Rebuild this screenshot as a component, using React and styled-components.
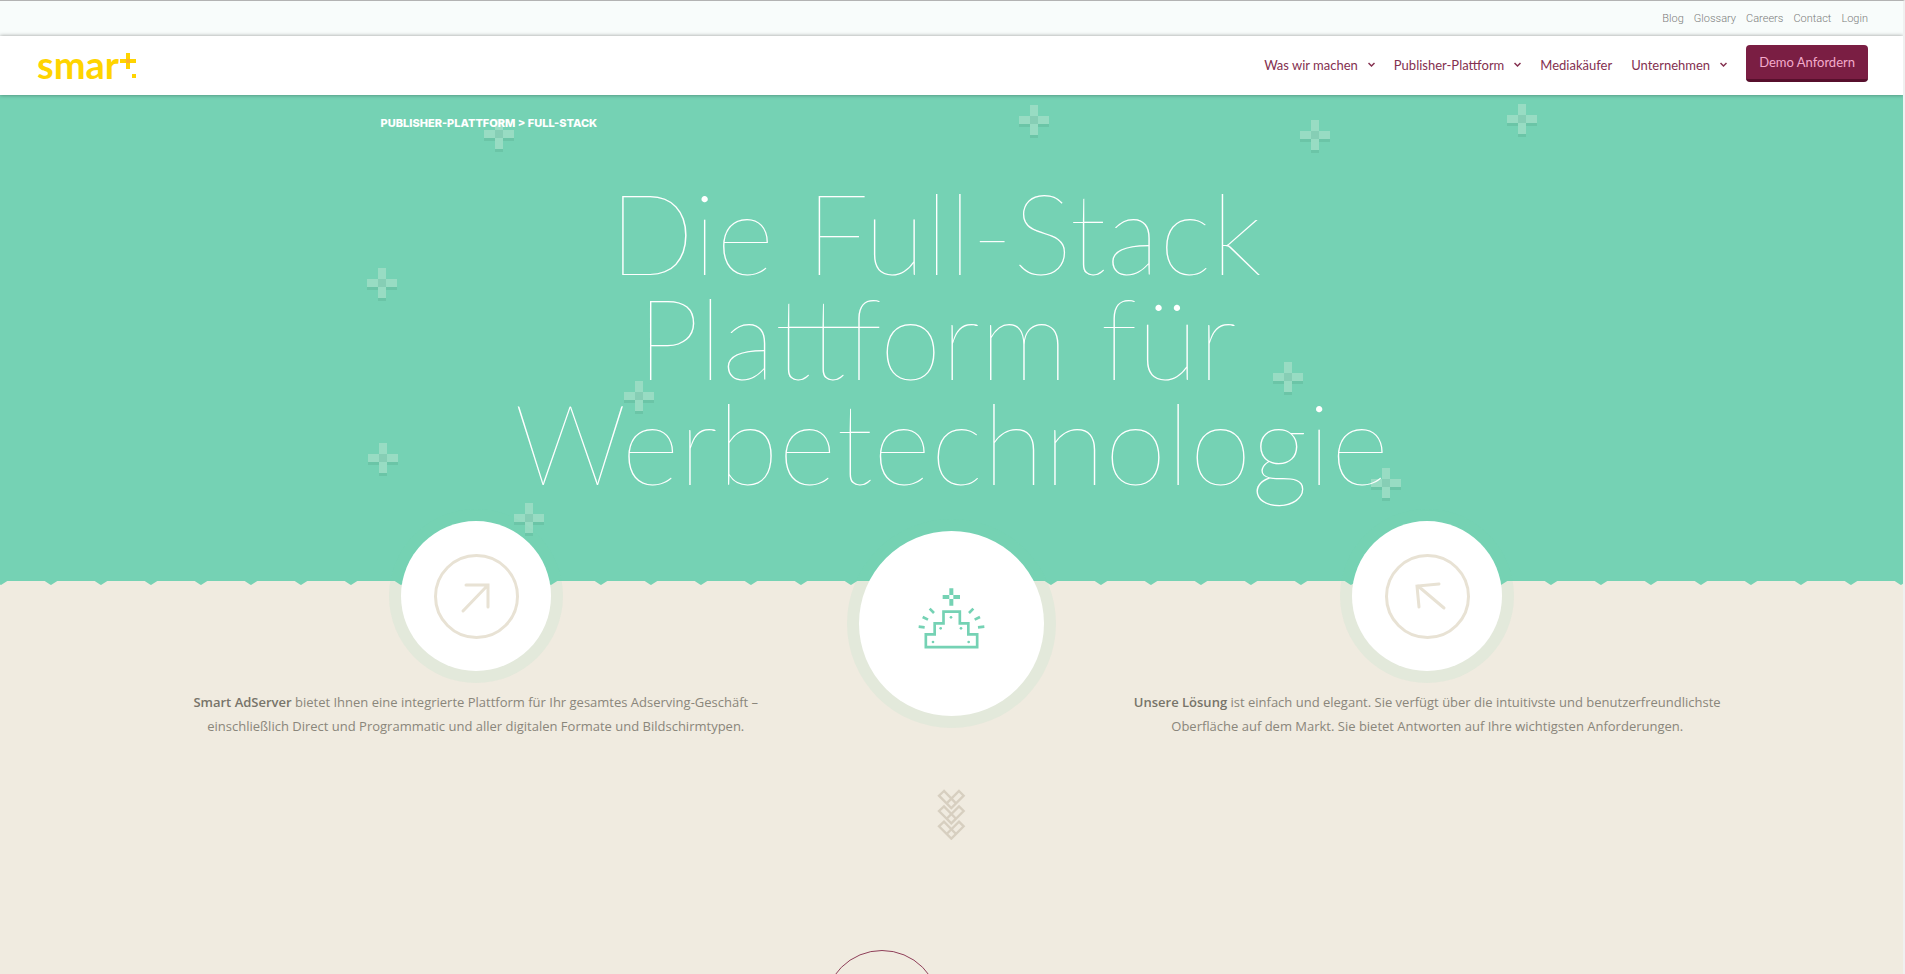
import React from 'react'
import styled, { createGlobalStyle } from 'styled-components'

const teal = '#75d2b4'
const beige = '#f0ebe0'
const plum = '#7a1e43'

const topLinks = ['Blog', 'Glossary', 'Careers', 'Contact', 'Login']

const navItems = [
    { label: 'Was wir machen', menu: true },
    { label: 'Publisher-Plattform', menu: true },
    { label: 'Mediakäufer', menu: false },
    { label: 'Unternehmen', menu: true },
]

// offsets inside the hero, x counts from the middle
const crosses = [
    { x: -468, y: 24 },
    { x: 67, y: 10 },
    { x: 348, y: 25 },
    { x: 555, y: 9 },
    { x: -585, y: 173 },
    { x: -328, y: 286 },
    { x: 321, y: 267 },
    { x: -584, y: 348 },
    { x: 419, y: 373 },
    { x: -438, y: 408 },
]

function Cross({ x, y }) {
    return (
        <CrossStyled $x={x} $y={y} viewBox="0 0 30 33" aria-hidden="true">
            <path d="M0 19h11v3H0zM19 19h11v3H19zM11 30h8v3h-8z" fill="#6bc5a7" />
            <path d="M11 0h8v11h11v8H19v11h-8V19H0v-8h11z" fill="#98dcc3" />
            <path d="M11 11h8v8h-8z" fill="#86ceb5" />
        </CrossStyled>
    )
}

function Logo() {
    return (
        <LogoLink href="#home" aria-label="smart">
            <span>smar</span>
            <svg width="17" height="26" viewBox="0 0 17 26" aria-hidden="true">
                <path d="M6 0h4v6h6v4h-6v6H6v-6H0V6h6zM12 21h4v4h-4z" fill="#ffd400" />
                <path d="M6 6h4v4H6z" fill="#fdb22c" />
            </svg>
        </LogoLink>
    )
}

function RingArrow({ d }) {
    return (
        <svg width="86" height="86" viewBox="0 0 86 86" fill="none" stroke="#e8e2d4" strokeWidth="3" strokeLinecap="round" aria-hidden="true">
            <circle cx="43.500" cy="43.500" r="41" />
            <path d={d} />
        </svg>
    )
}

function Pyramid() {
    return (
        <svg width="69" height="75" viewBox="230 198 207 225" fill="none" stroke={teal} strokeWidth="8" aria-hidden="true">
            <path d="M256.500 381.500V343H283V310H309.500V275H358.500V310H384V343H410.500V381.500Z" />
            <path d="M268 266L281 279M247 291L263 299M235 320L253 322M399 266L386 279M419 291L403 299M432 320L413 322" />
            <path d="M327 205h12v20h-12zM327 237h12v20h-12zM307 225h20v12h-20zM339 225h20v12h-20z" fill={teal} stroke="none" />
            <g fill={teal} stroke="none">
                <circle cx="332" cy="292" r="4" />
                <circle cx="301" cy="325" r="4" />
                <circle cx="362" cy="325" r="4" />
                <circle cx="278" cy="366" r="4" />
                <circle cx="385" cy="366" r="4" />
            </g>
        </svg>
    )
}

function ScrollMark() {
    return (
        <svg width="29" height="51" viewBox="0 0 87 153" fill="none" stroke="#d7cfc0" strokeWidth="7" aria-hidden="true">
            {[0, 46, 92].map((y) => (
                <path key={y} transform={`translate(0 ${y})`} d="M21 6L6 20L43 57L57 43ZM66 6L80 20L43 57L29 43Z" />
            ))}
        </svg>
    )
}

// saw edge that hangs under the hero
function Teeth() {
    return (
        <TeethStyled aria-hidden="true">
            <pattern id="teeth" width="50" height="4" patternUnits="userSpaceOnUse">
                <path d="M0 0H7.300L1 4L0 3.400ZM44.700 0H50V3.400Z" fill={teal} />
            </pattern>
            <rect width="100%" height="4" fill="url(#teeth)" />
        </TeethStyled>
    )
}

function App() {
    return (
        <Page>
            <GlobalStyle />
            <TopBar aria-label="Service">
                {topLinks.map((link) => (
                    <a key={link} href={`#${link.toLowerCase()}`}>{link}</a>
                ))}
            </TopBar>
            <Header>
                <Logo />
                <Nav>
                    {navItems.map(({ label, menu }) => (
                        <NavLink key={label} href="#nav">
                            {label}
                            {menu && (
                                <svg width="7" height="6" viewBox="0 0 7 6" fill="none" stroke="currentColor" strokeWidth="1.500" aria-hidden="true">
                                    <path d="M0.500 1L3.500 4L6.500 1" />
                                </svg>
                            )}
                        </NavLink>
                    ))}
                    <DemoButton type="button">Demo Anfordern</DemoButton>
                </Nav>
            </Header>
            <Hero>
                {crosses.map((c) => <Cross key={`${c.x}/${c.y}`} {...c} />)}
                <Breadcrumb>Publisher-Plattform &gt; Full-Stack</Breadcrumb>
                <Title>
                    Die Full-Stack&nbsp;<br />
                    Plattform für&nbsp;<br />
                    Werbetechnologie
                </Title>
                <Teeth />
            </Hero>
            <Intro>
                <Column>
                    <Disc $size={150}>
                        <RingArrow d="M30 58L54 33M33 32H55V54" />
                    </Disc>
                    <p>
                        <strong>Smart AdServer</strong> bietet Ihnen eine integrierte Plattform für Ihr gesamtes
                        Adserving-Geschäft –<br /> einschließlich Direct und Programmatic und aller digitalen Formate und
                        Bildschirmtypen.
                    </p>
                </Column>
                <Column>
                    <Disc $size={185} $drop={10}>
                        <Pyramid />
                    </Disc>
                </Column>
                <Column>
                    <Disc $size={150}>
                        <RingArrow d="M60 55L34 33M55 31L33 33L35 54" />
                    </Disc>
                    <p>
                        <strong>Unsere Lösung</strong> ist einfach und elegant. Sie verfügt über die intuitivste und
                        benutzerfreundlichste<br /> Oberfläche auf dem Markt. Sie bietet Antworten auf Ihre wichtigsten
                        Anforderungen.
                    </p>
                </Column>
            </Intro>
            <More>
                <ScrollMark />
                <Outline />
            </More>
        </Page>
    )
}

const GlobalStyle = createGlobalStyle`
    * {
        box-sizing: border-box;
    }
    body {
        margin: 0;
        background: ${beige};
        font-family: Inter, sans-serif;
    }
    a {
        color: inherit;
        text-decoration: none;
    }
    svg {
        flex: none;
    }
`

const Page = styled.main`
    display: flex;
    flex-direction: column;
    height: 100vh;
    overflow: hidden;
    border-top: 1px solid #b3b3b3;
    border-right: 2px solid #f0f0f0;
`

const TopBar = styled.nav`
    display: flex;
    flex: none;
    align-items: center;
    justify-content: flex-end;
    gap: 10px;
    height: 35px;
    padding: 0 35px;
    background: #f8fcfb;
    color: #7c7c7c;
    font: 300 11px Roboto, sans-serif;
`

const Header = styled.header`
    position: relative;
    z-index: 2;
    display: flex;
    flex: none;
    align-items: center;
    justify-content: space-between;
    height: 59px;
    padding: 0 35px 0 37px;
    background: #fff;
    box-shadow: 0 0 4px rgba(0, 0, 0, 0.4);
`

const LogoLink = styled.a`
    display: flex;
    align-items: center;
    gap: 1px;
    color: #ffd400;
    font: 700 38px/40px Lato, sans-serif;

    span {
        padding-bottom: 4px;
    }
`

const Nav = styled.nav`
    display: flex;
    align-items: center;
    gap: 19px;
`

const NavLink = styled.a`
    display: flex;
    align-items: center;
    gap: 10px;
    padding-bottom: 2px;
    color: #84304f;
    font: 400 13px Lato, sans-serif;
`

const DemoButton = styled.button`
    height: 37px;
    margin-bottom: 4px;
    padding: 0 13px;
    border: 0;
    border-bottom: 3px solid #570f2c;
    border-radius: 4px;
    background: ${plum};
    color: #f3abcb;
    font: 400 13px Lato, sans-serif;
`

const Hero = styled.section`
    position: relative;
    flex: none;
    height: 486px;
    padding: 20px 20% 0;
    background: ${teal};
    color: #fff;
`

const TeethStyled = styled.svg`
    position: absolute;
    top: 100%;
    left: 0;
    width: 100%;
    height: 4px;
`

const CrossStyled = styled.svg`
    position: absolute;
    top: ${({ $y }) => $y}px;
    left: calc(50% + ${({ $x }) => $x}px);
    width: 30px;
    height: 33px;
`

const Breadcrumb = styled.div`
    position: relative;
    font-size: 11px;
    font-weight: 800;
    line-height: 16px;
    text-transform: uppercase;
`

const Title = styled.h1`
    position: relative;
    margin: 48px 0 0;
    font: 100 112px/105px Lato, sans-serif;
    text-align: center;
    white-space: nowrap;
`

const Intro = styled.section`
    position: relative;
    z-index: 1;
    display: grid;
    flex: none;
    grid-template-columns: 40% 10% 40%;
    justify-content: center;
    margin-top: -60px;
`

const Column = styled.div`
    display: flex;
    flex-direction: column;
    align-items: center;

    p {
        margin: 19px 0 0;
        color: #8a867b;
        font: 400 13px/24px 'Open Sans', sans-serif;
        text-align: center;
        white-space: nowrap;
    }

    strong {
        color: #77746a;
        font-weight: 600;
    }
`

const Disc = styled.div`
    display: flex;
    align-items: center;
    justify-content: center;
    width: ${({ $size }) => $size}px;
    height: ${({ $size }) => $size}px;
    margin-top: ${({ $drop = 0 }) => $drop}px;
    border-radius: 50%;
    background: #fff;
    box-shadow: 0 0 0 12px rgba(117, 211, 180, 0.1);
`

const More = styled.section`
    display: flex;
    flex-direction: column;
    align-items: center;
    gap: 110px;
    padding-top: 51px;
`

const Outline = styled.div`
    flex: none;
    width: 116px;
    height: 116px;
    margin-right: 140px;
    border: 1px solid #8f3f59;
    border-radius: 50%;
`

export default App
